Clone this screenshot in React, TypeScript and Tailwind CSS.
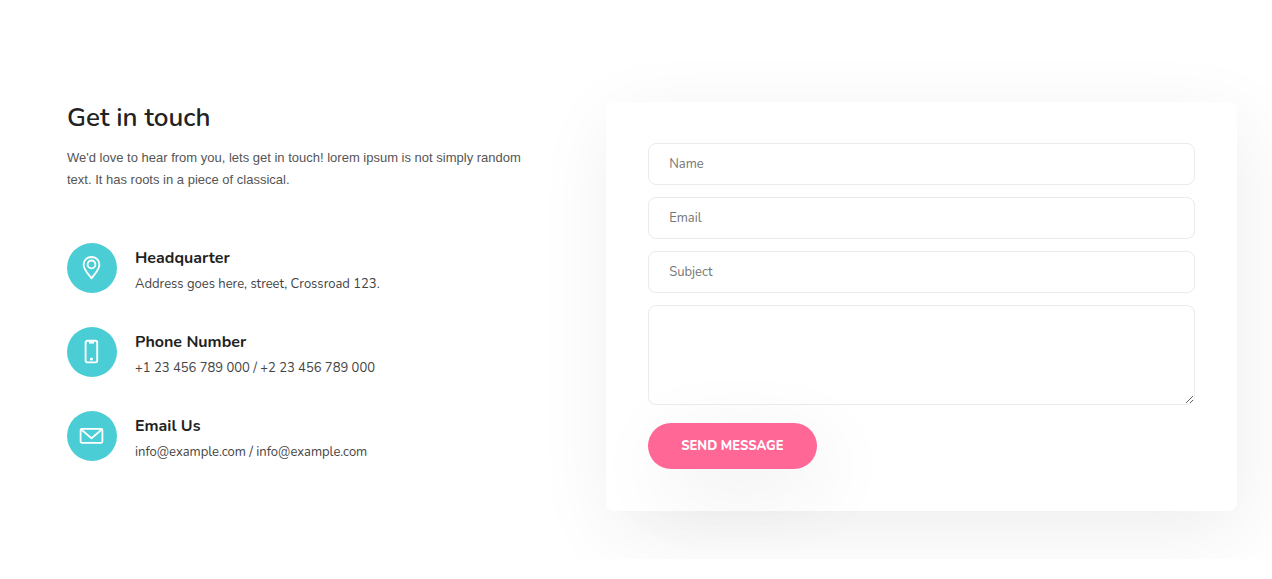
import type { ReactNode } from "react";

const heading = "font-['Nunito','Open_Sans',sans-serif]";
const field =
  "block w-full rounded-lg border border-[#ebebeb] bg-white px-5 font-['Nunito','Open_Sans',sans-serif] text-[13px] text-[#333] outline-none placeholder:text-[#757575] focus:border-[#4bcdd6]";

const PinIcon = () => (
  <svg width="26" height="26" viewBox="0 0 26 26" fill="none" stroke="white" strokeWidth="1.8">
    <path d="M12.5 23.4C10 20 4.6 14.4 4.6 9.7C4.6 5 8 2 12.5 2S20.4 5 20.4 9.7C20.4 14.4 15 20 12.5 23.4Z" strokeLinejoin="round" />
    <circle cx="12.5" cy="9.4" r="3.9" />
  </svg>
);

const PhoneIcon = () => (
  <svg width="26" height="26" viewBox="0 0 26 26" fill="none" stroke="white" strokeWidth="1.9">
    <rect x="6.6" y="1.8" width="11.6" height="21.6" rx="1.8" />
    <path d="M10 3.4H15" strokeWidth="2.4" />
    <circle cx="12.4" cy="20" r="1.6" fill="white" stroke="none" />
  </svg>
);

const MailIcon = () => (
  <svg width="26" height="26" viewBox="0 0 26 26" fill="none" stroke="white" strokeWidth="1.8">
    <rect x="1.6" y="5.8" width="21.8" height="14" rx="1.2" />
    <path d="M2.4 6.6L12.5 15.2L22.6 6.6" strokeLinejoin="round" />
  </svg>
);

interface Contact {
  id: string;
  title: string;
  text: string;
  icon: ReactNode;
}

const contacts: Contact[] = [
  {
    id: "address",
    title: "Headquarter",
    text: "Address goes here, street, Crossroad 123.",
    icon: <PinIcon />,
  },
  {
    id: "phone",
    title: "Phone Number",
    text: "+1 23 456 789 000 / +2 23 456 789 000",
    icon: <PhoneIcon />,
  },
  {
    id: "email",
    title: "Email Us",
    text: "info@example.com / info@example.com",
    icon: <MailIcon />,
  },
];

const ContactInfo = () => {
  return (
    <div>
      <h2 className={`${heading} text-[26px] leading-8 font-semibold text-[#222]`}>Get in touch</h2>
      <p className="mt-[13px] font-['Liberation_Sans',sans-serif] text-[13px] leading-[22px] text-[#555]">
        We'd love to hear from you, lets get in touch! lorem ipsum is not simply
        random text. It has roots in a piece of classical.
      </p>
      <ul className="mt-13 space-y-[33px]">
        {contacts.map((item) => (
          <li key={item.id} className="flex items-start gap-[18px]">
            <div className="flex size-[50px] shrink-0 items-center justify-center rounded-full bg-[#4bcdd6]">
              {item.icon}
            </div>
            <div className={`${heading} pt-[3px]`}>
              <h3 className="text-base leading-6 font-bold text-[#222]">{item.title}</h3>
              <p className="mt-1 text-[13px] leading-5 text-[#444]">{item.text}</p>
            </div>
          </li>
        ))}
      </ul>
    </div>
  );
};

const ContactForm = () => {
  return (
    <form
      className="rounded-lg bg-white px-[42px] pt-[41px] pb-[42px] shadow-[5px_20px_80px_rgba(0,0,0,0.07)]"
      onSubmit={(e) => e.preventDefault()}
    >
      <div className="space-y-3">
        <input type="text" name="name" aria-label="Name" placeholder="Name" className={`${field} h-[42px]`} />
        <input type="email" name="email" aria-label="Email" placeholder="Email" className={`${field} h-[42px]`} />
        <input type="text" name="subject" aria-label="Subject" placeholder="Subject" className={`${field} h-[42px]`} />
        <textarea name="message" aria-label="Message" className={`${field} h-[100px] py-3`} />
      </div>
      <button
        type="submit"
        className={`${heading} mt-[18px] h-[46px] rounded-full bg-[#ff6797] px-[33px] pt-[2px] text-[13px] font-extrabold text-white shadow-[10px_20px_80px_rgba(0,0,0,0.08)]`}
      >
        SEND MESSAGE
      </button>
    </form>
  );
};

const App = () => {
  return (
    <section className="overflow-hidden bg-white pt-[102px] pr-[35px] pb-12 pl-[67px]">
      <div className="grid gap-[66px] md:grid-cols-[3fr_4fr]">
        <ContactInfo />
        <ContactForm />
      </div>
    </section>
  );
};

export default App;
